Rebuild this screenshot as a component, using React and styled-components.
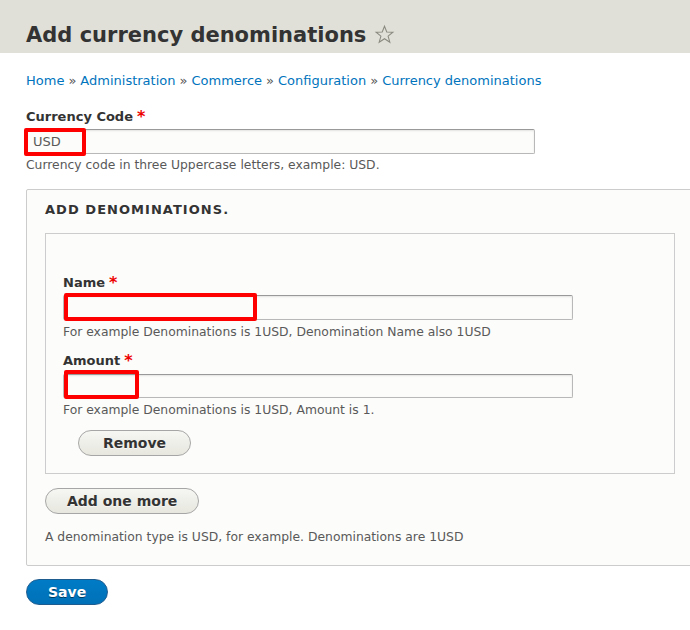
import styled, { createGlobalStyle } from "styled-components";

const GlobalStyle = createGlobalStyle`
  html, body {
    margin: 0;
    padding: 0;
    background: #fff;
    overflow-x: hidden;
  }
  body {
    font-family: "DejaVu Sans", "Liberation Sans", sans-serif;
    font-size: 13px;
    color: #333;
  }
`;

const Header = styled.header`
  background: #e0e0d8;
  height: 53px;
  padding: 20px 26px 0;
  box-sizing: border-box;
`;

const Title = styled.h1`
  margin: 0;
  font-size: 21px;
  line-height: 30px;
  font-weight: bold;
  color: #333;
  display: flex;
  align-items: center;
  gap: 8px;
`;

const Star = styled.svg`
  width: 21px;
  height: 21px;
  margin-top: -1px;
`;

const Page = styled.main`
  width: 720px;
  padding: 0 26px 30px;
  box-sizing: border-box;
`;

const Breadcrumb = styled.nav`
  margin-top: 19px;
  line-height: 18px;
  color: #555;

  a {
    color: #0074bd;
    text-decoration: none;
  }
`;

const Separator = styled.span`
  margin: 0 4px;
`;

const Label = styled.label`
  display: block;
  font-weight: bold;
  line-height: 18px;
  height: 18px;
  margin-top: ${({ $top }) => $top}px;
  color: #333;
`;

const Required = styled.span`
  color: #e00;
  font-size: 16px;
  line-height: 0;
  margin-left: 4px;
  position: relative;
  top: 1px;
`;

const Field = styled.div`
  position: relative;
  width: ${({ $width }) => $width}px;
  margin-top: ${({ $top }) => ($top === undefined ? 3 : $top)}px;
`;

const Input = styled.input`
  display: block;
  width: 100%;
  height: ${({ $height }) => $height || 25}px;
  box-sizing: border-box;
  padding: 0 6px;
  border: 1px solid #b8b8b8;
  border-top-color: #999;
  border-radius: 2px;
  background: #fcfcfa;
  box-shadow: inset 0 1px 2px rgba(0, 0, 0, 0.1);
  font-family: inherit;
  font-size: 13px;
  color: #595959;
  outline: none;
`;

const Highlight = styled.div`
  position: absolute;
  left: ${({ $l }) => $l}px;
  top: ${({ $t }) => $t}px;
  width: ${({ $w }) => $w}px;
  height: ${({ $h }) => $h}px;
  border: 4px solid #f00;
  border-radius: 2px;
  box-sizing: border-box;
  pointer-events: none;
`;

const Description = styled.div`
  font-size: 12.35px;
  line-height: 16px;
  color: #595959;
  margin-top: ${({ $top }) => ($top === undefined ? 3 : $top)}px;
`;

const Fieldset = styled.fieldset`
  margin: 16px 0 0;
  padding: 11px 18px 20px;
  border: 1px solid #ccc;
  border-radius: 2px;
  background: #fcfcfa;
  min-width: 0;
`;

const Legend = styled.div`
  font-weight: bold;
  text-transform: uppercase;
  letter-spacing: 0.08em;
  line-height: 18px;
  color: #333;
`;

const ItemBox = styled.div`
  margin-top: 14px;
  border: 1px solid #ccc;
  padding: 40px 17px 17px;
`;

const Button = styled.button`
  display: block;
  height: 26px;
  box-sizing: border-box;
  margin: ${({ $margin }) => $margin || "0"};
  padding: 0 ${({ $pad }) => $pad || 21}px;
  border: 1px solid ${({ $primary }) => ($primary ? "#1e5c90" : "#a6a6a6")};
  border-radius: 20em;
  background: ${({ $primary }) =>
    $primary
      ? "linear-gradient(to bottom, #007bc6, #0071b8)"
      : "linear-gradient(to bottom, #f6f6f3, #e7e7df)"};
  color: ${({ $primary }) => ($primary ? "#fff" : "#333")};
  font-family: inherit;
  font-size: 14px;
  font-weight: bold;
  line-height: 24px;
  text-shadow: ${({ $primary }) =>
    $primary ? "0 1px hsla(0,0%,0%,0.5)" : "0 1px hsla(0,0%,100%,0.6)"};
  cursor: pointer;
`;

const crumbs = ["Home", "Administration", "Commerce", "Configuration", "Currency denominations"];

export default function App() {
  return (
    <>
      <GlobalStyle />
      <Header>
        <Title>
          Add currency denominations
          <Star viewBox="0 0 24 24" fill="none" stroke="#8a8a80" strokeWidth="1.2" strokeLinejoin="miter">
            <polygon points="12,2.5 14.6,9.2 21.6,9.4 16.1,13.8 18.1,20.8 12,16.8 5.9,20.8 7.9,13.8 2.4,9.4 9.4,9.2" />
          </Star>
        </Title>
      </Header>
      <Page>
        <Breadcrumb>
          {crumbs.map((c, i) => (
            <span key={c}>
              {i > 0 && <Separator>»</Separator>}
              <a href="#">{c}</a>
            </span>
          ))}
        </Breadcrumb>

        <Label $top={18}>
          Currency Code<Required>*</Required>
        </Label>
        <Field $width={509}>
          <Input defaultValue="USD" />
          <Highlight $l={-2} $t={-1} $w={62} $h={28} />
        </Field>
        <Description>Currency code in three Uppercase letters, example: USD.</Description>

        <Fieldset>
          <Legend>Add denominations.</Legend>
          <ItemBox>
            <Label $top={0}>
              Name<Required>*</Required>
            </Label>
            <Field $width={510}>
              <Input />
              <Highlight $l={1} $t={-2} $w={193} $h={28} />
            </Field>
            <Description $top={4}>For example Denominations is 1USD, Denomination Name also 1USD</Description>

            <Label $top={12}>
              Amount<Required>*</Required>
            </Label>
            <Field $width={510} $top={4}>
              <Input $height={24} />
              <Highlight $l={1} $t={-4} $w={75} $h={29} />
            </Field>
            <Description $top={4}>For example Denominations is 1USD, Amount is 1.</Description>

            <Button type="button" $margin="12px 0 0 15px" $pad={24}>
              Remove
            </Button>
          </ItemBox>

          <Button type="button" $margin="14px 0 0">
            Add one more
          </Button>
          <Description $top={15}>A denomination type is USD, for example. Denominations are 1USD</Description>
        </Fieldset>

        <Button type="submit" $primary $margin="13px 0 0">
          Save
        </Button>
      </Page>
    </>
  );
}
